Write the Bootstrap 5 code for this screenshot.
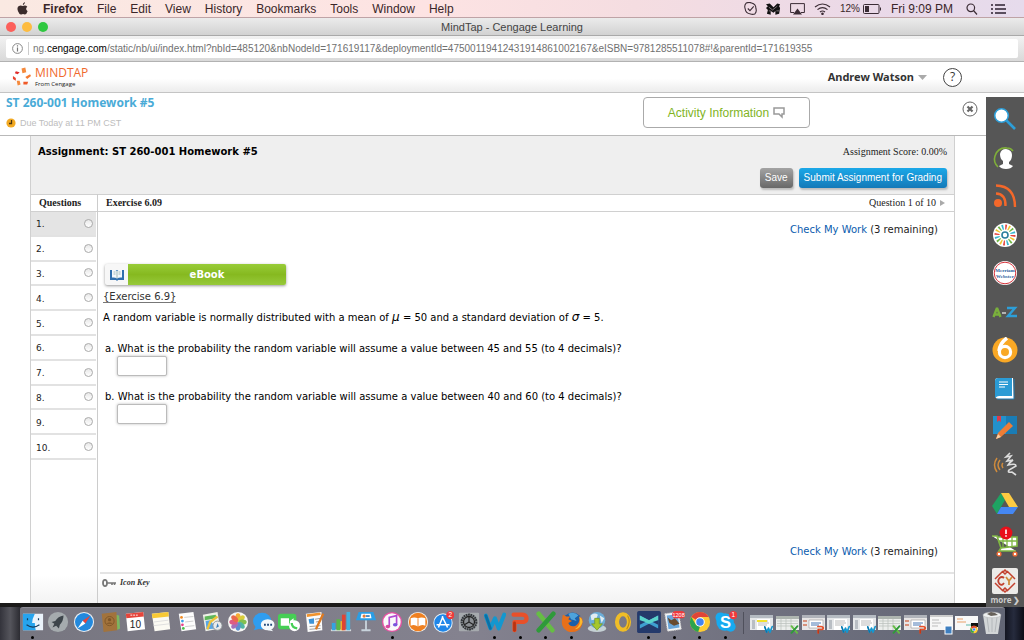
<!DOCTYPE html>
<html lang="en">
<head>
<meta charset="utf-8">
<meta name="viewport" content="width=device-width, initial-scale=1">
<title>MindTap - Cengage Learning</title>
<link href="https://cdn.jsdelivr.net/npm/bootstrap@5.3.0/dist/css/bootstrap.min.css" rel="stylesheet">
<style>
  :root { --ui: "Liberation Sans", Arial, sans-serif; --verd: "DejaVu Sans", Verdana, sans-serif; --serif: "Liberation Serif", "Times New Roman", serif; --open: "Open Sans", "Noto Sans", sans-serif; }
  body { font-family: var(--ui); font-size: 12px; line-height: 16px; color: #222; background: #fff; }
  a { text-decoration: none; color: inherit; }
  button, input { font-family: inherit; }
  svg { display: block; flex: none; }

  .menubar { height: 18px; background: linear-gradient(90deg, #fae9e2, #fde3e3 42%, #f5dde1 62%, #ead9e8 85%, #e6dbec); border-bottom: 1px solid #bfa3a6; color: #3a2629; padding: 0 18px 0 16px; }
  .menubar .menus { gap: 14px; }
  .menubar .tray { gap: 9px; }
  .menubar .pct { font-size: 10px; gap: 3px; }
  .titlebar { height: 18px; background: linear-gradient(#ebebeb, #d2d2d2); border-bottom: 1px solid #a9a9a9; font-size: 11px; color: #444; padding: 0 6px; }
  .titlebar .side { width: 60px; gap: 6px; }
  .light { width: 10px; height: 10px; border-radius: 50%; border: 0; padding: 0; }
  .light-red { background: #fc605b; }
  .light-amber { background: #fdbc40; }
  .light-green { background: #2fc840; }
  .urlbar { height: 26px; background: linear-gradient(#f2f2f2, #d9d9d9); border-bottom: 1px solid #b2b2b2; padding: 3px 6px 4px; }
  .urlfield { background: #fff; border-radius: 2px; height: 19px; font-size: 10px; color: #777; padding-left: 6px; }
  .urlfield label b { font-weight: 400; color: #000; }
  .urlfield label { border-left: 1px solid #ccc; margin-left: 5px; padding-left: 4px; line-height: 13px; }
  .urlfield input { border: 0; padding: 0; background: none; color: #707070; outline: 0; min-width: 0; }

  .brandbar { height: 31px; background: linear-gradient(#fff 55%, #ececec); border-bottom: 1px solid #c4c4c4; padding: 0 62px 0 12px; }
  .brandname { color: #f0692c; font: 12px/14px var(--open); }
  .brandfrom { color: #222; font: 6px/8px var(--open); }
  .username { font: 700 11px/16px "Noto Sans", var(--open); color: #333; }
  .help { width: 19px; height: 19px; border: 1px solid #444; border-radius: 50%; padding: 0; background: #fff; font: 12px/16px var(--open); color: #333; }

  .coursebar { height: 43px; border-bottom: 1px solid #b9b9b9; padding: 0 8px 0 6px; }
  .coursebar h1 { font: 700 12px/16px "Noto Sans", var(--open); color: #4aabd7; margin: 2px 0 5px; }
  .due { font: 9px/14px var(--ui); color: #bdbdbd; gap: 4px; }
  .activity { width: 167px; height: 31px; margin-right: 152px; background: #fff; border: 1px solid #aaa; border-radius: 4px; color: #81b41f; font-size: 12px; }
  .closer { border: 0; background: none; padding: 0; }

  .sheet { margin: 0 31px 0 30px; background: linear-gradient(#fff 94%, #f3f3f3); border: solid #d0d0d0; border-width: 0 1px; }
  .assign { background: #efefef; height: 58px; padding: 8px 7px 6px; }
  .assign h2 { font: 700 10px/16px var(--verd); color: #000; margin: 0; }
  .assign .acts { gap: 6px; }
  .score, .exhead { font: 10px/16px var(--serif); color: #222; }
  .act { border: 0; border-radius: 3px; height: 20px; font: 10px/16px var(--ui); color: #fff; box-shadow: 1px 2px 2px #bbb; padding: 1px 5px; }
  .act-save { background: linear-gradient(#a3a3a3, #686868); }
  .act-submit { background: linear-gradient(#1ba8e8, #1479b8); }
  .qlist { width: 67px; border-right: 1px solid #ccc; }
  .exhead { height: 18px; border: solid #d0d0d0; border-width: 1px 0; }
  .qrows { display: grid; grid-template-rows: repeat(10, 1fr); height: 248px; margin: 0; padding: 0 1px 0 0; list-style: none; }
  .qrows li { border-bottom: 2px solid #e2e2e2; }
  .qrows li.current { background: #e4e4e4; }
  .qrows label { font: 9px/16px var(--verd); padding: 2px 3px 0 5px; height: 100%; color: #222; }
  .qrows input { appearance: none; width: 9px; height: 9px; margin: 0 0 2px; border: 1px solid #aaa; border-radius: 50%; background: linear-gradient(#e8e8e8, #fff); }
  .work { font: 10px/16px var(--verd); color: #000; padding: 10px 16px 12px 5px; }
  .work .remain { color: #222; }
  .work .remain a { color: #0a5cae; }
  .ebook { width: 181px; height: 21px; margin: 26px 0 0 2px; border: 0; padding: 0; background: #f7f7f7; box-shadow: 0 1px 3px #999; border-radius: 2px; overflow: hidden; flex: none; }
  .ebook .bookmark { width: 23px; }
  .ebook .cap { background: linear-gradient(#98cc38, #86b920 50%, #97c93a); color: #fff; font: 700 10px/21px var(--verd); }
  .exlink { border-bottom: 1px solid #777; color: #333; line-height: 13px; }
  .work p { margin: 0; }
  .work .ital { font-style: italic; font-size: 12px; }
  .work .part { padding-left: 2px; margin-bottom: 14px; }
  .work .part label { display: block; line-height: 14px; }
  .answer { display: block; width: 50px; height: 20px; border: 1px solid #bbb; border-radius: 2px; box-shadow: 0 0 3px #bbb; margin-left: 12px; padding: 1px 3px; }
  .keybar { height: 31px; border-top: 2px solid #e4e4e4; margin-left: 2px; padding: 2px 2px 0; font: italic 700 8px/14px var(--serif); color: #333; }
  .edge { height: 4px; background: #1b1a19; }

  .tools { width: 38px; background: #565656; margin-top: 4px; padding-top: 3px; }
  .tools a { flex: 1 1 0; }
  .tools .more { flex: none; height: 12px; margin-top: -5px; font: 700 8px/10px var(--open); color: #ccc; }

  .desktop { height: 33px; background: linear-gradient(90deg, #33333b, #55555c 1%, #2a2a30 2%, #333 50%, #10121c 98%, #262b3d 99%, #0c0d16); padding: 0 19px 0 20px; }
  .dock { background: linear-gradient(90deg, #777680, #84828f 45%, #70717f 75%, #626675); border-radius: 3px 3px 0 0; border-top: 1px solid #8c8b95; }
  .dock a { flex: 1 1 0; min-width: 0; padding-top: 3px; display: flex; flex-direction: column; align-items: center; }
  .dock a.on::after { content: ""; width: 3px; height: 3px; border-radius: 50%; background: #000; margin-top: 3px; }
  .dock .rule { width: 10px; }
  .dock .rule::before { content: ""; display: block; width: 1px; height: 22px; margin: 4px auto; background: #4f505c; }
</style>
</head>
<body>
<svg width="0" height="0" class="position-absolute" aria-hidden="true">
  <symbol id="wd" viewBox="0 0 24 24"><path d="M2 5 7 19 12 8 16 19 22 4" fill="none" stroke="#1497cf" stroke-width="4.400" stroke-linecap="round" stroke-linejoin="round"/><path d="M2 5 7 19" stroke="#0b6fa5" stroke-width="3" stroke-linecap="round"/></symbol>
  <symbol id="pp" viewBox="0 0 24 24"><path d="M6 21V12H16Q20 11 19 7 18 4 14 4H5" fill="none" stroke="#e8502a" stroke-width="4.600" stroke-linecap="round" stroke-linejoin="round"/><path d="M6 13V21" stroke="#b93312" stroke-width="3" stroke-linecap="round"/></symbol>
  <symbol id="xl" viewBox="0 0 24 24"><path d="M4 3 19 21" stroke="#66bd44" stroke-width="5" stroke-linecap="round"/><path d="M20 3 4 21" stroke="#2f9a3a" stroke-width="5" stroke-linecap="round"/></symbol>
  <symbol id="ch" viewBox="0 0 24 24"><circle cx="12" cy="12" r="11" fill="#fc3"/><path d="M12 12 2.500 6.500A11 11 0 0 1 21.500 6.500H12Z" fill="#e04438"/><path d="M2.500 6.500 7.500 15 12 17 10 22.800A11 11 0 0 1 2.500 6.500" fill="#2da44e"/><circle cx="12" cy="12" r="5.200" fill="#fff"/><circle cx="12" cy="12" r="4.100" fill="#4285f4"/></symbol>
  <symbol id="win" viewBox="0 0 24 24"><path d="M1 4H24V19H1Z" fill="#e6e8ea"/><path d="M1 4H24V7H1Z" fill="#b5bbc2"/><path d="M3 9H6V18H3Z" fill="#b9bec4"/><path d="M8 8H21V19H8Z" fill="#fff"/><path d="M9 10H19M9 12H20M9 14H18" stroke="#aaa" stroke-width=".8"/></symbol>
  <symbol id="grid" viewBox="0 0 24 24"><path d="M1 5H24V19H1Z" fill="#eceeec"/><path d="M1 5H24V8H1Z" fill="#aeb5b0"/><path d="M2 10H23M2 12.500H23M2 15H20M6 8V19M11 8V19M16 8V19" stroke="#b9beba" stroke-width=".7"/></symbol>
  <symbol id="slide" viewBox="0 0 24 24"><path d="M1 4H24V19H1Z" fill="#e8e6e6"/><path d="M1 4H24V7H1Z" fill="#b0b3ba"/><path d="M8 9H22V17H8Z" fill="#fff" stroke="#999" stroke-width=".6"/><path d="M2 9H6V11H2ZM2 13H6V15H2Z" fill="#d7917b"/><path d="M10 12H20M10 14H18" stroke="#4b79b4"/></symbol>
</svg>

<div class="d-flex flex-column min-vh-100">
  <header>
    <nav class="menubar d-flex align-items-center justify-content-between" aria-label="System menu">
      <div class="menus d-flex align-items-center">
        <a href="#" aria-label="Apple"><svg width="13" height="14" viewBox="0 0 13 14" fill="#3b2c2c"><path d="M9 0Q9 2 7 3.200 6.300 1.200 9 0M6.800 4Q9.500 2.600 11.300 4.700 8.800 6.800 11.600 9.200 10.500 12.500 8.800 12.500 7 11.700 5.300 12.500 3.500 13 2 9.300.5 5.300 3 3.900 4.700 3 6.800 4"/></svg></a>
        <a href="#" class="fw-bold">Firefox</a><a href="#">File</a><a href="#">Edit</a><a href="#">View</a><a href="#">History</a><a href="#">Bookmarks</a><a href="#">Tools</a><a href="#">Window</a><a href="#">Help</a>
      </div>
      <div class="tray d-flex align-items-center">
        <svg width="13" height="13" viewBox="0 0 12 12" fill="none" stroke="#3b2c35"><path d="M2 1Q5-.3 7 1 11 2 11 6 12 9 10 11 8 11.800 6 11 1.500 10.500 1 6 0 3 2 1Z"/><path d="M3.500 6 5.500 8 9 4"/></svg>
        <svg width="15" height="12" viewBox="0 0 16 12" fill="#111"><path d="M0 1 4 0 8 4 12 0 15 1 14 3 15 5 14 11 10 12V8L8 10 5 8V12L1 11 2 7 0 5 2 3Z"/><path d="M3 4 7 7 12 3M3 8H5M11 8H14" stroke="#ead9e5" stroke-width=".5" fill="none"/></svg>
        <svg width="15" height="12" viewBox="0 0 15 12"><path d="M4 9.500H.6V.6H14.400V9.500H11" fill="none" stroke="#3b2c35"/><path d="M7.500 5.500 12 11.500H3Z" fill="#3b2c35"/></svg>
        <svg width="17" height="12" viewBox="0 0 17 12" fill="none" stroke="#3b2c35" stroke-width="1.200"><path d="M1 4Q8.500-2 16 4M3.500 6.600Q8.500 2.500 13.500 6.600M6 9Q8.500 7 11 9"/><circle cx="8.500" cy="10.800" r=".7" fill="#3b2c35"/></svg>
        <span class="pct d-flex align-items-center">12%<svg width="19" height="10" viewBox="0 0 19 10"><rect x=".5" y=".5" width="15.500" height="9" rx="1" fill="none" stroke="#3b2c35"/><path d="M2 2H6V8H2ZM17 3.500H18V6.500H17Z" fill="#3b2c35"/></svg></span>
        <span>Fri 9:09 PM</span>
        <svg class="ms-1" width="12" height="12" viewBox="0 0 12 12" fill="none" stroke="#3b2c35" stroke-width="1.200"><circle cx="4.800" cy="4.800" r="3.800"/><path d="M7.500 7.500 11 11.500"/></svg>
        <svg class="ms-1" width="15" height="10" viewBox="0 0 15 10" stroke="#2c2030" stroke-width="1.400"><path d="M4 1H14M4 5H15M4 9H15M0 1H2M0 5H2M0 9H2"/></svg>
      </div>
    </nav>
    <div class="titlebar d-flex align-items-center justify-content-between">
      <div class="side d-flex">
        <button class="light light-red" aria-label="Close window"></button>
        <button class="light light-amber" aria-label="Minimise window"></button>
        <button class="light light-green" aria-label="Zoom window"></button>
      </div>
      <span>MindTap - Cengage Learning</span>
      <div class="side"></div>
    </div>
    <div class="urlbar">
      <div class="urlfield d-flex align-items-center">
        <svg width="11" height="11" viewBox="0 0 11 11"><circle cx="5.500" cy="5.500" r="4.900" fill="none" stroke="#888"/><path d="M5.500 2.300V3.500M5.500 4.500V8.500" stroke="#777" stroke-width="1.200"/></svg>
        <label for="url">ng.<b>cengage.com</b></label><input id="url" class="flex-grow-1" type="text" value="/static/nb/ui/index.html?nbId=485120&amp;nbNodeId=171619117&amp;deploymentId=47500119412431914861002167&amp;eISBN=9781285511078#!&amp;parentId=171619355">
      </div>
    </div>
    <div class="brandbar d-flex align-items-center justify-content-between">
      <a href="#" class="d-flex align-items-center gap-1">
        <svg width="19" height="20" viewBox="0 0 20 20"><path d="M10 1 14 0 15 5 11 6Z" fill="#f58a3c"/><path d="M14 10 19 7 20 9 16 12Z" fill="#f47a30"/><path d="M12 15 17 15 16 18 12 18Z" fill="#ef5a28"/><path d="M5 14H8L9 18 6 19Z" fill="#f58a3c"/><path d="M1 9 4 11 4 14 1 12Z" fill="#e8432d"/><path d="M4 4 8 5 6 7 3 6Z" fill="#e02c2c"/></svg>
        <span class="d-flex flex-column"><span class="brandname">MINDTAP</span><span class="brandfrom">From Cengage</span></span>
      </a>
      <div class="d-flex align-items-center">
        <a href="#" class="username">Andrew Watson</a>
        <svg class="ms-1 me-3" width="9" height="5" viewBox="0 0 9 5"><path d="M0 0H9L4.500 5Z" fill="#aaa"/></svg>
        <button class="help" aria-label="Help">?</button>
      </div>
    </div>
  </header>

  <div class="d-flex flex-grow-1">
    <div class="d-flex flex-column flex-grow-1">
      <div class="coursebar d-flex">
        <div class="flex-grow-1">
          <h1>ST 260-001 Homework #5</h1>
          <div class="due d-flex align-items-center"><svg width="10" height="10" viewBox="0 0 10 10"><circle cx="5" cy="5" r="4.600" fill="#f2a922"/><path d="M5.500 2V5.500H3" fill="none" stroke="#4b3512" stroke-width="1.300"/></svg>Due Today at 11 PM CST</div>
        </div>
        <button class="activity d-flex align-items-center justify-content-center mt-1 gap-1 p-0">Activity Information <svg width="12" height="14" viewBox="0 0 12 14" fill="none" stroke="#999" stroke-width="1.500"><path d="M1 2H11V8H9V11L6 8H1Z"/></svg></button>
        <button class="closer align-self-start pt-1 mt-1" aria-label="Close activity"><svg width="16" height="16" viewBox="0 0 16 16" fill="none" stroke="#666"><circle cx="8" cy="8" r="7"/><path d="M5.500 5.500 10.500 10.500M10.500 5.500 5.500 10.500" stroke-width="2.200"/></svg></button>
      </div>

      <main class="sheet d-flex flex-column flex-grow-1">
        <div class="assign d-flex justify-content-between">
          <h2>Assignment: ST 260-001 Homework #5</h2>
          <div class="d-flex flex-column justify-content-between align-items-end">
            <div class="score">Assignment Score: 0.00%</div>
            <div class="acts d-flex"><button class="act act-save">Save</button><button class="act act-submit">Submit Assignment for Grading</button></div>
          </div>
        </div>
        <div class="d-flex flex-grow-1">
          <div class="qlist flex-shrink-0">
            <div class="exhead fw-bold px-2">Questions</div>
            <ol class="qrows">
              <li class="current"><label class="d-flex align-items-center justify-content-between">1.<input type="radio" name="q"></label></li>
              <li><label class="d-flex align-items-center justify-content-between">2.<input type="radio" name="q"></label></li>
              <li><label class="d-flex align-items-center justify-content-between">3.<input type="radio" name="q"></label></li>
              <li><label class="d-flex align-items-center justify-content-between">4.<input type="radio" name="q"></label></li>
              <li><label class="d-flex align-items-center justify-content-between">5.<input type="radio" name="q"></label></li>
              <li><label class="d-flex align-items-center justify-content-between">6.<input type="radio" name="q"></label></li>
              <li><label class="d-flex align-items-center justify-content-between">7.<input type="radio" name="q"></label></li>
              <li><label class="d-flex align-items-center justify-content-between">8.<input type="radio" name="q"></label></li>
              <li><label class="d-flex align-items-center justify-content-between">9.<input type="radio" name="q"></label></li>
              <li><label class="d-flex align-items-center justify-content-between">10.<input type="radio" name="q"></label></li>
            </ol>
          </div>
          <div class="d-flex flex-column flex-grow-1">
            <div class="exhead d-flex justify-content-between px-2"><b>Exercise 6.09</b><a href="#" class="d-flex align-items-center gap-1">Question 1 of 10 <svg width="6" height="6" viewBox="0 0 6 6"><path d="M0 0 5 3 0 6Z" fill="#aaa"/></svg></a></div>
            <div class="work d-flex flex-column flex-grow-1">
              <div class="remain text-end"><a href="#">Check My Work</a> (3 remaining)</div>
              <button class="ebook d-flex"><span class="bookmark d-flex justify-content-center align-items-center h-100"><svg width="14" height="12" viewBox="0 0 14 12"><path d="M0 1H14V11H8L7 12 6 11H0Z" fill="#2f6fae"/><path d="M2 1Q5 0 7 2 9 0 12 1V8.500Q9 8 7 9.500 5 8 2 8.500Z" fill="#f4f8fc"/><path d="M7 2V9.500M3.500 3H5.500M3.500 5H5.500M8.500 3H10.500M8.500 5H10.500" stroke="#8aa" stroke-width=".8"/></svg></span><span class="cap flex-grow-1">eBook</span></button>
              <div class="mt-1"><a href="#" class="exlink">{Exercise 6.9}</a></div>
              <p class="mt-1">A random variable is normally distributed with a mean of <span class="ital">μ</span> = 50 and a standard deviation of <span class="ital">σ</span> = 5.</p>
              <div class="part mt-3"><label for="qa">a. What is the probability the random variable will assume a value between 45 and 55 (to 4 decimals)?</label><input id="qa" class="answer" type="text"></div>
              <div class="part"><label for="qb">b. What is the probability the random variable will assume a value between 40 and 60 (to 4 decimals)?</label><input id="qb" class="answer" type="text"></div>
              <div class="remain text-end mt-auto"><a href="#">Check My Work</a> (3 remaining)</div>
            </div>
            <div class="keybar d-flex align-items-start gap-1"><svg width="14" height="14" viewBox="0 0 14 14" fill="none" stroke="#777"><ellipse cx="3" cy="7" rx="2" ry="3.200" stroke-width="1.800"/><path d="M5 7H14M10 7V9M12.500 7V9" stroke-width="1.600"/></svg>Icon Key</div>
          </div>
        </div>
      </main>
      <div class="edge"></div>
    </div>

    <nav class="tools d-flex flex-column flex-shrink-0" aria-label="Learning tools">
      <a href="#" class="d-flex align-items-center justify-content-center" aria-label="Search"><svg width="26" height="26" viewBox="0 0 26 26"><path d="M13 13 23 23" stroke="#2d9ed8" stroke-width="2.600"/><circle cx="9.500" cy="9.500" r="6.800" fill="#fff" stroke="#2d9ed8" stroke-width="1.600"/></svg></a>
      <a href="#" class="d-flex align-items-center justify-content-center" aria-label="Profile"><svg width="26" height="26" viewBox="0 0 26 26"><path d="M6 22Q1 17 3 11 6 2 15 3 19 3 21 6" fill="none" stroke="#7fae3a" stroke-width="1.600"/><path d="M8 9Q9 4 14 4 20 5 20 10 20 15 17 17V19L21 21Q19 24 14 24 9 24 7 21L11 19V16Q8 14 8 9" fill="#fff"/></svg></a>
      <a href="#" class="d-flex align-items-center justify-content-center" aria-label="Feed"><svg width="26" height="26" viewBox="0 0 26 26"><circle cx="6" cy="20" r="4" fill="#f4682a"/><path d="M4 10.500Q14 11 13.500 23M4 2.500Q23 3 23 24" fill="none" stroke="#f4682a" stroke-width="2.400"/></svg></a>
      <a href="#" class="d-flex align-items-center justify-content-center" aria-label="Network"><svg width="26" height="26" viewBox="0 0 26 26" fill="none"><circle cx="13" cy="13" r="12" fill="#fff"/><circle cx="13" cy="13" r="8" stroke="#e5423c" stroke-width="5" stroke-dasharray="1.500 11.066"/><circle cx="13" cy="13" r="8" stroke="#f0c62e" stroke-width="5" stroke-dasharray="1.500 11.066" stroke-dashoffset="-3.100"/><circle cx="13" cy="13" r="8" stroke="#6eb545" stroke-width="5" stroke-dasharray="1.500 11.066" stroke-dashoffset="-6.200"/><circle cx="13" cy="13" r="8" stroke="#37b5cf" stroke-width="5" stroke-dasharray="1.500 11.066" stroke-dashoffset="-9.300"/><circle cx="13" cy="13" r="3" fill="#fff" stroke="#2b7f9e" stroke-width="1.600"/></svg></a>
      <a href="#" class="d-flex align-items-center justify-content-center" aria-label="Merriam-Webster"><svg width="26" height="26" viewBox="0 0 26 26"><circle cx="13" cy="13" r="12" fill="#fff"/><circle cx="13" cy="13" r="10.800" fill="none" stroke="#d6343c"/><g font-family="Liberation Serif, serif" font-weight="700" font-size="5" fill="#2b62a0" text-anchor="middle"><text x="13" y="12">Merriam</text><text x="13" y="18">Webster</text></g></svg></a>
      <a href="#" class="d-flex align-items-center justify-content-center" aria-label="Glossary A-Z"><svg width="26" height="14" viewBox="0 0 26 14" fill="none" stroke-width="2.400"><path d="M1.500 12 5 3 8.500 12M3 9.500H7" stroke="#7ab03c" stroke-linejoin="bevel"/><path d="M10 8H14" stroke="#ccc" stroke-width="1.600"/><path d="M15 3H23L16 11H25" stroke="#2d9ed8"/></svg></a>
      <a href="#" class="d-flex align-items-center justify-content-center" aria-label="Study centre"><svg width="26" height="26" viewBox="0 0 26 26"><circle cx="13" cy="13" r="12.500" fill="#f9a825"/><path d="M15 1Q8 6 7 14" fill="none" stroke="#fff" stroke-width="3.600"/><circle cx="13" cy="15" r="5.600" fill="none" stroke="#fff" stroke-width="3.200"/></svg></a>
      <a href="#" class="d-flex align-items-center justify-content-center" aria-label="Book"><svg width="22" height="24" viewBox="0 0 22 24"><path d="M4 1H19L20 22H4Q1 21 1 18V4Q1 1 4 1" fill="#fff"/><path d="M4 1H18V19H5Q3 19 1 21V4Q1 1 4 1" fill="#2b9bd5"/><path d="M3 22H20V2" fill="none" stroke="#1e78b0"/><path d="M5 5H14M5 7.500H14M5 10H11" stroke="#fff"/></svg></a>
      <a href="#" class="d-flex align-items-center justify-content-center" aria-label="Highlights"><svg width="26" height="26" viewBox="0 0 26 26"><path d="M1 2H25V20H1Z" fill="#2391cc"/><path d="M14 2H25V20H14Z" fill="#1a7cb5"/><path d="M5 2H9V8L7 6.500 5 8Z" fill="#dc3c4c"/><path d="M6 19 17 8 21 12 9 23 4 25Z" fill="#ee7d35"/><path d="M6 20 4 25 9 23Z" fill="#f9cfa3"/></svg></a>
      <a href="#" class="d-flex align-items-center justify-content-center" aria-label="Read aloud"><svg width="26" height="26" viewBox="0 0 26 26" fill="none"><path d="M5 6Q0 13 5 20M8 8Q4 13 8 18M11 11Q9 13 11 16" stroke="#cf8b3c" stroke-width="1.500"/><path d="M18 1 14 5 19 4 15 9 21 8Q17 11 16 13 24 11 24 14L17 18Q15 21 20 20L24 23" stroke="#ddd" stroke-width="1.600"/></svg></a>
      <a href="#" class="d-flex align-items-center justify-content-center" aria-label="Drive"><svg width="26" height="24" viewBox="0 0 26 24"><path d="M9 1 13 8 5 22 0 14Z" fill="#1ea362"/><path d="M9 1H17L26 15H17Z" fill="#fdcb42"/><path d="M9 15H26L21 22H5Z" fill="#4587f3"/></svg></a>
      <a href="#" class="d-flex align-items-center justify-content-center" aria-label="Store"><svg width="28" height="32" viewBox="0 0 28 32"><path d="M1 10H6L10 22 8 25H25M6 11H26V20L10 22" fill="#fff" stroke="#7fb642" stroke-width="1.700"/><path d="M8 15H26M12 11V21M16 11V21M21 11V20" stroke="#7fb642" stroke-width="1.300"/><circle cx="8" cy="28" r="1.900" fill="#fff" stroke="#f06a35" stroke-width="1.400"/><circle cx="24" cy="28" r="1.900" fill="#fff" stroke="#f06a35" stroke-width="1.400"/><circle cx="15" cy="7" r="6.400" fill="#e9101a"/><path d="M15 3.500V8M15 9.300V10.800" stroke="#fff" stroke-width="1.600"/></svg></a>
      <a href="#" class="d-flex align-items-center justify-content-center" aria-label="Chegg study"><svg width="26" height="26" viewBox="0 0 26 26" fill="none"><rect width="26" height="26" rx="2" fill="#ecebe8"/><path d="M11 3 3 11M15 3 23 11M3 15 11 23M23 15 15 23M13 2 15 4 13 6 11 4ZM13 20 15 22 13 24 11 22Z" stroke="#c2402f" stroke-width="1.500"/><path d="M12 10Q10 8 7.500 10 5 13 7.500 16 10 18 12 15" stroke="#c2402f" stroke-width="1.800"/><path d="M14 9 17 13V17M20 9 17 13" stroke="#cf8b3c" stroke-width="1.800"/></svg></a>
      <a href="#" class="more text-center">more&#8239;❯</a>
    </nav>
  </div>

  <footer class="desktop">
    <nav class="dock d-flex h-100" aria-label="Dock">
      <a href="#" class="on" aria-label="Finder"><svg width="22" height="22" viewBox="0 0 24 24"><path d="M1 3H23V21H1Z" fill="#eaf3fb"/><path d="M1 3H14Q11 9 11 13H14Q14 18 15 21H1Z" fill="#26a4ee"/><path d="M6 8V10M18 8V10M5 15Q12 20 19 15" stroke="#123a5c" stroke-width="1.300" fill="none"/></svg></a>
      <a href="#" aria-label="Launchpad"><svg width="22" height="22" viewBox="0 0 24 24"><circle cx="12" cy="12" r="11" fill="#a5abae"/><path d="M18 5Q12 6 9 11L5 12 8 14 6 18 10 16 13 19 14 15Q18 11 18 5" fill="#3d454b"/></svg></a>
      <a href="#" aria-label="Safari"><svg width="22" height="22" viewBox="0 0 24 24"><circle cx="12" cy="12" r="11" fill="#e8eef3"/><circle cx="12" cy="12" r="9.800" fill="#2389dd"/><path d="M19 5 13.500 13.500 10.500 10.500Z" fill="#e8443b"/><path d="M5 19 10.500 10.500 13.500 13.500Z" fill="#fff"/></svg></a>
      <a href="#" aria-label="Contacts"><svg width="22" height="22" viewBox="0 0 24 24"><path d="M18 4 22 5 23 19 19 21Z" fill="#7bb661"/><path d="M3 3 19 1 20 21 5 23Z" fill="#a2733c"/><circle cx="11.500" cy="11" r="5" fill="none" stroke="#7d5527"/><circle cx="11.500" cy="9.500" r="1.800" fill="#7d5527"/><path d="M8 14Q11.500 11 15 14" fill="#7d5527"/></svg></a>
      <a href="#" aria-label="Calendar"><svg width="22" height="22" viewBox="0 0 24 24"><path d="M2 3 21 1 23 20 4 22Z" fill="#fff"/><path d="M2 3 21 1 21.600 6 2.500 8Z" fill="#e5453b"/><text x="12.500" y="18.500" font-family="Liberation Sans, sans-serif" font-size="11" text-anchor="middle" fill="#222">10</text><path d="M7 4.500H16" stroke="#fff" stroke-dasharray="2 1"/></svg></a>
      <a href="#" aria-label="Notes"><svg width="22" height="22" viewBox="0 0 24 24"><path d="M2 3 20 1 22 20 5 22Z" fill="#fbfaf3"/><path d="M2 3 20 1 20.600 6 2.600 8Z" fill="#f8c935"/><path d="M4 12 20 10M4 16 21 14" stroke="#ddd"/></svg></a>
      <a href="#" aria-label="Reminders"><svg width="22" height="22" viewBox="0 0 24 24"><path d="M3 3 19 1 22 20 6 22Z" fill="#fdfdfd"/><path d="M9 7 19 6M10 12 19 11M10 17 20 16" stroke="#ccc"/><circle cx="6" cy="7" r="1.500" fill="#f08a24"/><circle cx="7" cy="11" r="1.500" fill="#3a9fe8"/><circle cx="7" cy="15" r="1.500" fill="#e9408a"/><circle cx="8" cy="19" r="1.500" fill="#49c04c"/></svg></a>
      <a href="#" aria-label="Maps"><svg width="22" height="22" viewBox="0 0 24 24"><path d="M2 4 18 1 21 19 5 22Z" fill="#eef0e8"/><path d="M4 6 16 4 17 8 4 10Z" fill="#5fb75b"/><path d="M5 11 10 10 17 19 6 20Z" fill="#5aa6e3"/><path d="M7 20 10 12 18 6" stroke="#f0c33a" stroke-width="2.500" fill="none"/><circle cx="18" cy="16" r="5" fill="#e8eaec" stroke="#8b9094"/><path d="M18 13 19.500 17 16.500 18.500Z" fill="#3b7db8"/></svg></a>
      <a href="#" aria-label="Photos"><svg width="22" height="22" viewBox="0 0 24 24"><circle cx="12" cy="12" r="11" fill="#f6f6f4"/><g opacity=".9"><ellipse cx="12" cy="7" rx="2.800" ry="4.500" fill="#f6a522"/><ellipse cx="12" cy="7" rx="2.800" ry="4.500" fill="#d6c927" transform="rotate(45 12 12)"/><ellipse cx="12" cy="7" rx="2.800" ry="4.500" fill="#79bb3e" transform="rotate(90 12 12)"/><ellipse cx="12" cy="7" rx="2.800" ry="4.500" fill="#3fae9b" transform="rotate(135 12 12)"/><ellipse cx="12" cy="7" rx="2.800" ry="4.500" fill="#4a84cc" transform="rotate(180 12 12)"/><ellipse cx="12" cy="7" rx="2.800" ry="4.500" fill="#9b62b4" transform="rotate(225 12 12)"/><ellipse cx="12" cy="7" rx="2.800" ry="4.500" fill="#dc4b7a" transform="rotate(270 12 12)"/><ellipse cx="12" cy="7" rx="2.800" ry="4.500" fill="#ea5a3a" transform="rotate(315 12 12)"/></g></svg></a>
      <a href="#" aria-label="Messages"><svg width="22" height="22" viewBox="0 0 24 24"><ellipse cx="10" cy="11" rx="10" ry="9" fill="#2f9df0"/><path d="M3 17 1 21 8 19" fill="#2f9df0"/><ellipse cx="16" cy="15" rx="7.500" ry="6" fill="#f4f8fb"/><path d="M19 19 22 22 16 21" fill="#f4f8fb"/><path d="M12 15H21" stroke="#234b7c" stroke-width="2" stroke-dasharray="2 1.400"/></svg></a>
      <a href="#" aria-label="FaceTime"><svg width="22" height="22" viewBox="0 0 24 24"><rect x="0" y="3" width="20" height="17" rx="3" fill="#46cf55"/><path d="M3 8H12V16H3ZM13 11 17 8V16L13 13Z" fill="#fff"/><circle cx="18" cy="16" r="6" fill="#fff"/><path d="M15 13Q15 18 21 19" fill="none" stroke="#46cf55" stroke-width="2.500"/></svg></a>
      <a href="#" aria-label="Pages"><svg width="22" height="22" viewBox="0 0 24 24"><path d="M2 3 19 1 20 21 4 23Z" fill="#fbfbfb"/><path d="M3 5 18 3" stroke="#f0932d" stroke-width="3"/><path d="M5 9 11 8 11 14 6 14Z" fill="#3b93d8"/><path d="M12 9 18 8M13 12 18 11M6 17 18 16M6 20 18 19" stroke="#999"/><path d="M21 3 13 20" stroke="#e07a1f" stroke-width="2.500"/></svg></a>
      <a href="#" aria-label="Numbers"><svg width="22" height="22" viewBox="0 0 24 24"><path d="M1 21H23" stroke="#ddd" stroke-width="2"/><path d="M2 13H6V21H2Z" fill="#33a4e0"/><path d="M7 9H11V21H7Z" fill="#57b947"/><path d="M11.500 11H15V21H11.500Z" fill="#f3b82b"/><path d="M13 4H17V21H13Z" fill="#df4434"/><path d="M18 1H22V21H18Z" fill="#44b1dd"/></svg></a>
      <a href="#" aria-label="Keynote"><svg width="22" height="22" viewBox="0 0 24 24"><path d="M11 10H13V20H17V22H7V20H11Z" fill="#c8d3dc"/><path d="M4 1H20L23 10H1Z" fill="#2b9de4"/><path d="M7 3H17L18 8H6Z" fill="#fff"/><circle cx="10" cy="5.500" r="1.800" fill="#e07b3c"/><path d="M12 5.500H16" stroke="#3f86c6" stroke-width="2"/></svg></a>
      <a href="#" class="on" aria-label="iTunes"><svg width="22" height="22" viewBox="0 0 24 24"><circle cx="12" cy="12" r="11" fill="#e653a4"/><circle cx="12" cy="12" r="9.500" fill="#fafafa"/><path d="M9 17V7L17 5V15" fill="none" stroke="#b24ad0" stroke-width="1.800"/><ellipse cx="7.500" cy="17" rx="2.500" ry="2" fill="#d84a9e"/><ellipse cx="15.500" cy="15" rx="2.500" ry="2" fill="#7b55dd"/></svg></a>
      <a href="#" aria-label="iBooks"><svg width="22" height="22" viewBox="0 0 24 24"><circle cx="12" cy="12" r="11" fill="#f5f0ea"/><circle cx="12" cy="12" r="10" fill="#ef8021"/><path d="M4 8Q8 6 12 8 16 6 20 8V16Q16 14 12 17 8 14 4 16Z" fill="#fff"/><path d="M12 8V17" stroke="#ef8021"/></svg></a>
      <a href="#" aria-label="App Store"><svg width="22" height="22" viewBox="0 0 24 24"><circle cx="12" cy="13" r="10.500" fill="#e7f1f9"/><circle cx="12" cy="13" r="9.500" fill="#1f86e8"/><path d="M12 6 7 18M11 6 17 18M5 15H19" stroke="#fff" stroke-width="1.700"/><circle cx="20" cy="4.500" r="4.500" fill="#ee3a3c"/><text x="20" y="7" font-family="Liberation Sans, sans-serif" font-size="7" fill="#fff" text-anchor="middle">2</text></svg></a>
      <a href="#" aria-label="System Preferences"><svg width="22" height="22" viewBox="0 0 24 24"><rect x="1" y="2" width="22" height="20" rx="1" fill="#a6aaae"/><circle cx="12" cy="12" r="8" fill="none" stroke="#34383c" stroke-width="2.400" stroke-dasharray="2 .6"/><circle cx="12" cy="12" r="6" fill="#8b8f94" stroke="#222" stroke-width="1.400"/><path d="M12 12V6M12 12 7 15M12 12 17 15" stroke="#222" stroke-width="1.300"/></svg></a>
      <a href="#" class="on" aria-label="Word"><svg width="22" height="22"><use href="#wd"/></svg></a>
      <a href="#" class="on" aria-label="PowerPoint"><svg width="22" height="22"><use href="#pp"/></svg></a>
      <a href="#" class="on" aria-label="Excel"><svg width="22" height="22"><use href="#xl"/></svg></a>
      <a href="#" class="on" aria-label="Firefox"><svg width="22" height="22" viewBox="0 0 24 24"><circle cx="12.500" cy="12" r="10.500" fill="#1d5fa8"/><path d="M8 3Q15 0 19 5L15 8 17 11 11 9Z" fill="#4da3dc"/><path d="M2 4 6 6 10 6 8 9 12 11 8 13Q10 18 16 16 21 13 20 6L23 8Q25 16 19 21 13 24.500 7 22 0 18 1 10Z" fill="#e8701a"/><path d="M20 6Q23 15 15 20 21 20 23.500 12Q23 8 20 6" fill="#fbb92d"/></svg></a>
      <a href="#" aria-label="Downloader"><svg width="22" height="22" viewBox="0 0 24 24"><ellipse cx="12" cy="19" rx="10" ry="4" fill="#c5d1d5"/><circle cx="12" cy="10" r="9" fill="#6badd8"/><path d="M5 5Q9 1 13 4L11 9 6 10ZM15 5 20 8 17 13Z" fill="#e1ecf2"/><path d="M9.500 8H14.500V14H18L12 21 6 14H9.500Z" fill="#a6c72d" stroke="#6a8d1c" stroke-width=".7"/></svg></a>
      <a href="#" aria-label="Outlook"><svg width="22" height="22" viewBox="0 0 24 24"><ellipse cx="12" cy="12" rx="6.500" ry="8.500" fill="none" stroke="#efbd28" stroke-width="4.500"/><path d="M17 5Q21 12 16 20" fill="none" stroke="#c08a12" stroke-width="1.200"/></svg></a>
      <a href="#" class="on" aria-label="Mirror"><svg width="24" height="22" viewBox="0 0 26 24"><rect width="26" height="24" rx="2" fill="#24396b"/><path d="M3 5 13 10 23 5V19L13 14 3 19Z" fill="#3f9fd0"/><path d="M3 5 13 10 23 5V10L13 14 3 10Z" fill="#5bd3cb"/><path d="M3 10 9 12 3 15ZM23 10 17 12 23 15Z" fill="#24396b"/></svg></a>
      <a href="#" class="on" aria-label="Mail"><svg width="22" height="22" viewBox="0 0 24 24"><path d="M2 3 17 1 20 20 5 22Z" fill="#f4f5f6" stroke="#ccc" stroke-dasharray="1.500 1"/><path d="M4 5 16 3.500 18 18 6 20Z" fill="#6ba7da"/><path d="M5 7 9 10 13 8 18 14 12 16 7 13Z" fill="#694a2e"/><rect x="10" y="0" width="14" height="8" rx="4" fill="#ee3a3c"/><text x="17" y="6" font-family="Liberation Sans, sans-serif" font-size="6" fill="#fff" text-anchor="middle">1208</text></svg></a>
      <a href="#" class="on" aria-label="Chrome"><svg width="22" height="22"><use href="#ch"/></svg></a>
      <a href="#" class="on" aria-label="Skype"><svg width="22" height="22" viewBox="0 0 24 24"><circle cx="11" cy="12" r="9.500" fill="#17aaf0"/><circle cx="6" cy="7" r="5.500" fill="#17aaf0"/><circle cx="17" cy="17" r="5.500" fill="#17aaf0"/><text x="11.500" y="18.500" font-family="Liberation Sans, sans-serif" font-size="18" font-weight="700" fill="#fff" text-anchor="middle">S</text><circle cx="20" cy="4.500" r="4.500" fill="#ee3a3c"/><text x="20" y="7" font-family="Liberation Sans, sans-serif" font-size="7" fill="#fff" text-anchor="middle">1</text></svg></a>
      <span class="rule"></span>
      <a href="#" aria-label="Word window"><svg width="24" height="24" viewBox="0 0 24 24"><use href="#win"/><path d="M8 10H18" stroke="#f2e12c" stroke-width="2"/><use href="#wd" x="15" y="14" width="9" height="9"/></svg></a>
      <a href="#" aria-label="Excel window"><svg width="24" height="24" viewBox="0 0 24 24"><use href="#grid"/><use href="#xl" x="15" y="14" width="9" height="9"/></svg></a>
      <a href="#" aria-label="PowerPoint window"><svg width="24" height="24" viewBox="0 0 24 24"><use href="#slide"/><use href="#pp" x="15" y="14" width="9" height="9"/></svg></a>
      <a href="#" aria-label="Word window"><svg width="24" height="24" viewBox="0 0 24 24"><use href="#win"/><use href="#wd" x="15" y="14" width="9" height="9"/></svg></a>
      <a href="#" aria-label="Word window"><svg width="24" height="24" viewBox="0 0 24 24"><use href="#win"/><use href="#wd" x="15" y="14" width="9" height="9"/></svg></a>
      <a href="#" aria-label="Excel window"><svg width="24" height="24" viewBox="0 0 24 24"><use href="#grid"/><use href="#xl" x="15" y="14" width="9" height="9"/></svg></a>
      <a href="#" aria-label="PowerPoint window"><svg width="24" height="24" viewBox="0 0 24 24"><use href="#slide"/><use href="#pp" x="15" y="14" width="9" height="9"/></svg></a>
      <a href="#" aria-label="Mail window"><svg width="24" height="24" viewBox="0 0 24 24"><path d="M1 4H24V19H1Z" fill="#f6f6f6"/><path d="M1 4H24V6H1Z" fill="#ccc"/><path d="M3 9H10M3 12H12M3 15H9" stroke="#bbb"/><rect x="16" y="15" width="7" height="8" fill="#3e7fc0" stroke="#fff"/></svg></a>
      <a href="#" aria-label="Chrome window"><svg width="24" height="24" viewBox="0 0 24 24"><path d="M1 5H24V19H1Z" fill="#f8f8f8"/><path d="M3 8H9M3 11H12" stroke="#e8a06a"/><path d="M12 14H17" stroke="#5ab7a6"/><path d="M17 12H24V16H17Z" fill="#111"/><use href="#ch" x="16" y="14" width="8" height="9"/></svg></a>
      <a href="#" aria-label="Trash"><svg width="20" height="24" viewBox="0 0 20 24"><path d="M1 4 4 23H16L19 4Z" fill="#d2d5d7"/><path d="M5 6 7 21M10 6V21M15 6 13 21" stroke="#b4b8bb"/><ellipse cx="10" cy="4" rx="9" ry="2.800" fill="#eef0f1" stroke="#bbb" stroke-width=".6"/><path d="M5 3 9 1 13 2 16 4 9 5Z" fill="#67615a"/></svg></a>
    </nav>
  </footer>
</div>
<script src="https://cdn.jsdelivr.net/npm/bootstrap@5.3.0/dist/js/bootstrap.bundle.min.js"></script>
</body>
</html>
